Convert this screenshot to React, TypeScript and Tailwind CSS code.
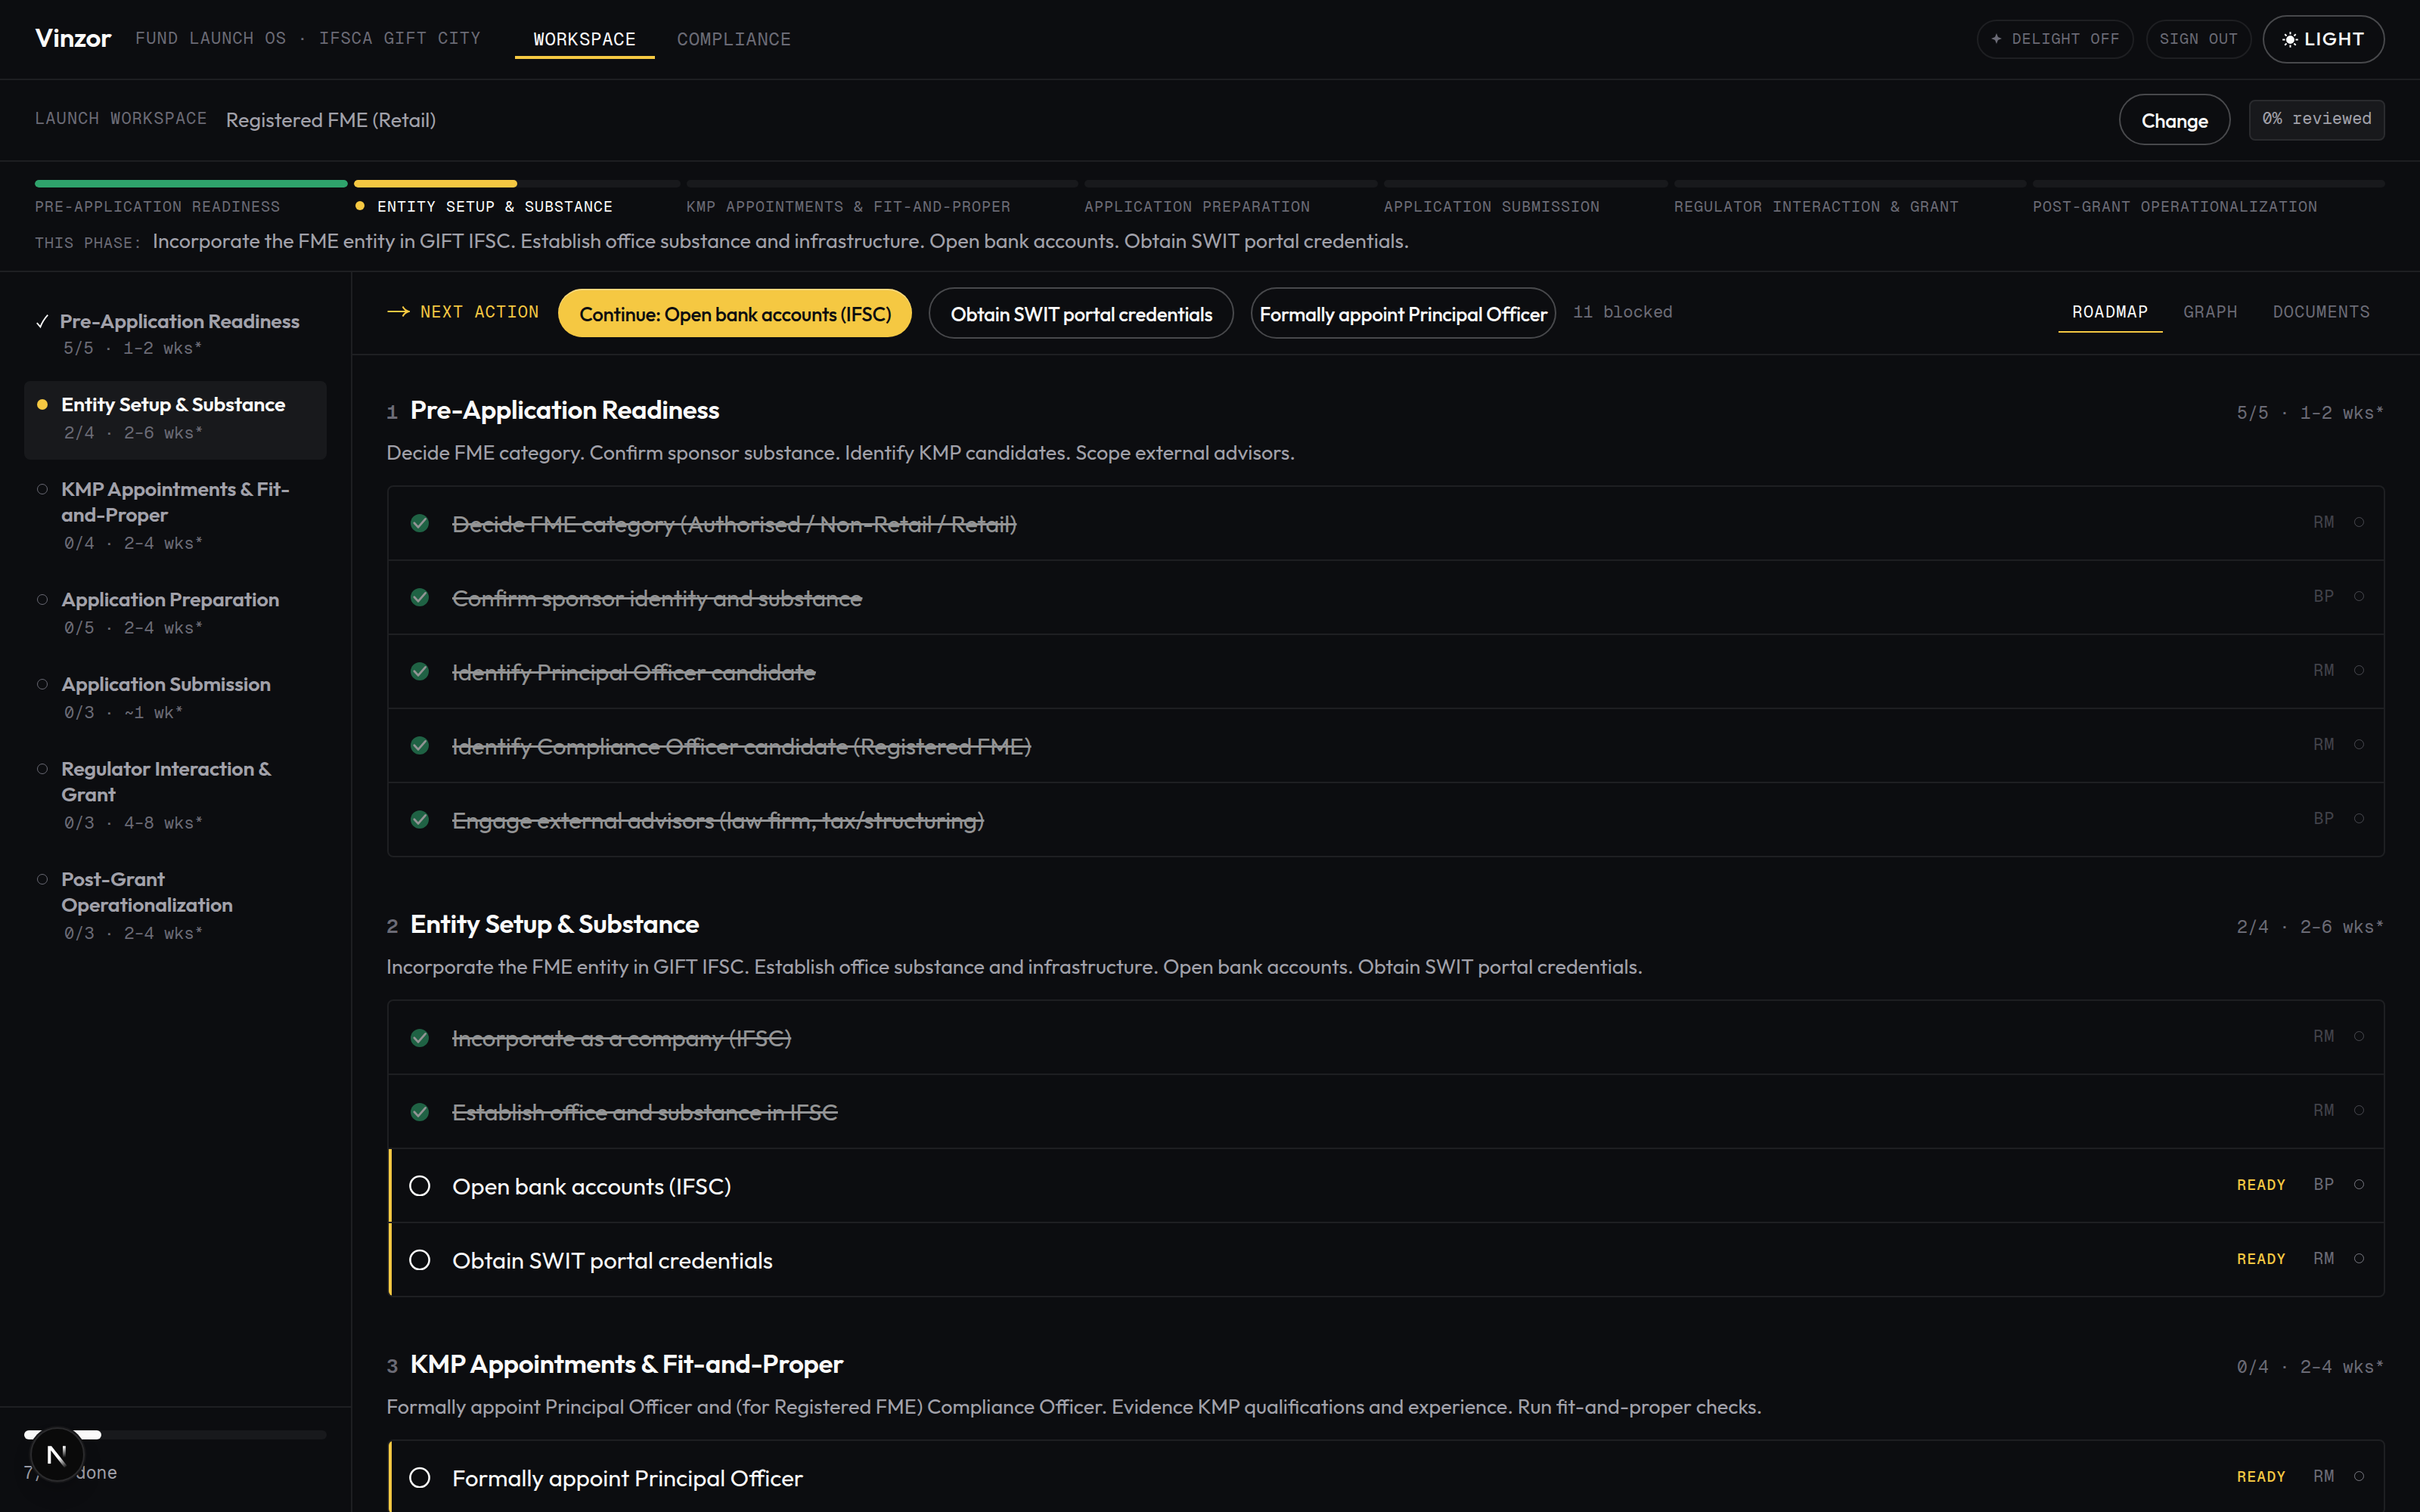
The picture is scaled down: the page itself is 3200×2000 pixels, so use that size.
import type { ReactNode } from 'react';

const SANS = "font-['Outfit','Lato',sans-serif]";
const MONO = "font-['Geist_Mono','DejaVu_Sans_Mono',monospace]";

type Task = { title: string; owner: string; done?: boolean };
type Section = { id: number; title: string; meta: string; desc: string; tasks: Task[]; iconOffset?: string };
type Status = 'done' | 'active' | 'todo';

const phases: { label: string; bar: string; status: Status }[] = [
  { label: 'PRE-APPLICATION READINESS', bar: 'w-[414px]', status: 'done' },
  { label: 'ENTITY SETUP & SUBSTANCE', bar: 'w-[432px]', status: 'active' },
  { label: 'KMP APPOINTMENTS & FIT-AND-PROPER', bar: 'w-[518px]', status: 'todo' },
  { label: 'APPLICATION PREPARATION', bar: 'w-[388px]', status: 'todo' },
  { label: 'APPLICATION SUBMISSION', bar: 'w-[376px]', status: 'todo' },
  { label: 'REGULATOR INTERACTION & GRANT', bar: 'w-[466px]', status: 'todo' },
  { label: 'POST-GRANT OPERATIONALIZATION', bar: 'w-[466px]', status: 'todo' },
];

const sidebar: { title: string; meta: string; status: Status }[] = [
  { title: 'Pre-Application Readiness', meta: '5/5 · 1–2 wks*', status: 'done' },
  { title: 'Entity Setup & Substance', meta: '2/4 · 2–6 wks*', status: 'active' },
  { title: 'KMP Appointments & Fit-and-Proper', meta: '0/4 · 2–4 wks*', status: 'todo' },
  { title: 'Application Preparation', meta: '0/5 · 2–4 wks*', status: 'todo' },
  { title: 'Application Submission', meta: '0/3 · ~1 wk*', status: 'todo' },
  { title: 'Regulator Interaction & Grant', meta: '0/3 · 4–8 wks*', status: 'todo' },
  { title: 'Post-Grant Operationalization', meta: '0/3 · 2–4 wks*', status: 'todo' },
];

const sections: Section[] = [
  {
    id: 1,
    title: 'Pre-Application Readiness',
    meta: '5/5 · 1–2 wks*',
    desc: 'Decide FME category. Confirm sponsor substance. Identify KMP candidates. Scope external advisors.',
    iconOffset: 'mb-[2px]',
    tasks: [
      { title: 'Decide FME category (Authorised / Non-Retail / Retail)', owner: 'RM', done: true },
      { title: 'Confirm sponsor identity and substance', owner: 'BP', done: true },
      { title: 'Identify Principal Officer candidate', owner: 'RM', done: true },
      { title: 'Identify Compliance Officer candidate (Registered FME)', owner: 'RM', done: true },
      { title: 'Engage external advisors (law firm, tax/structuring)', owner: 'BP', done: true },
    ],
  },
  {
    id: 2,
    title: 'Entity Setup & Substance',
    meta: '2/4 · 2–6 wks*',
    desc: 'Incorporate the FME entity in GIFT IFSC. Establish office substance and infrastructure. Open bank accounts. Obtain SWIT portal credentials.',
    tasks: [
      { title: 'Incorporate as a company (IFSC)', owner: 'RM', done: true },
      { title: 'Establish office and substance in IFSC', owner: 'RM', done: true },
      { title: 'Open bank accounts (IFSC)', owner: 'BP' },
      { title: 'Obtain SWIT portal credentials', owner: 'RM' },
    ],
  },
  {
    id: 3,
    title: 'KMP Appointments & Fit-and-Proper',
    meta: '0/4 · 2–4 wks*',
    desc: 'Formally appoint Principal Officer and (for Registered FME) Compliance Officer. Evidence KMP qualifications and experience. Run fit-and-proper checks.',
    tasks: [{ title: 'Formally appoint Principal Officer', owner: 'RM' }],
  },
];

function Mono({ className, children }: { className: string; children: ReactNode }) {
  return <span className={`${MONO} whitespace-nowrap ${className}`}>{children}</span>;
}

function OutlineButton({ className, children }: { className: string; children: ReactNode }) {
  return (
    <button
      className={`flex h-[68px] shrink-0 items-center justify-center whitespace-nowrap rounded-full border-2 border-[#48494c] pt-[2px] text-[26px] font-medium tracking-[-0.38px] text-[#fafafa] ${className}`}
    >
      {children}
    </button>
  );
}

function StarIcon() {
  return (
    <svg className="size-[14px]" viewBox="0 0 14 14" fill="currentColor">
      <path d="M7 0 L9 5 L14 7 L9 9 L7 14 L5 9 L0 7 L5 5 Z" />
    </svg>
  );
}

function SunIcon() {
  return (
    <svg className="size-[21px]" viewBox="0 0 20 20" fill="none" stroke="currentColor" strokeWidth="1.9">
      <circle cx="10" cy="10" r="5.2" fill="currentColor" stroke="none" />
      <path d="M10 0.2 V3.4 M10 16.6 V19.8 M0.2 10 H3.4 M16.6 10 H19.8 M3.1 3.1 L5.3 5.3 M14.7 14.7 L16.9 16.9 M3.1 16.9 L5.3 14.7 M14.7 5.3 L16.9 3.1" />
    </svg>
  );
}

function Header() {
  return (
    <header className="flex h-[106px] items-center border-b-2 border-[#1e1f22] px-[46px]">
      <span className="mb-[6px] text-[35px] font-semibold tracking-[-0.35px]">Vinzor</span>
      <Mono className="mb-[3px] ml-[31px] text-[22px] tracking-[1.1px] text-[#6b6b76]">FUND LAUNCH OS · IFSCA GIFT CITY</Mono>
      <nav className="ml-[45px] flex gap-[6px]">
        <a className={`${MONO} flex h-[52px] items-center border-b-4 border-[#f5c842] px-6 pt-[4px] text-[24px] tracking-[0.72px] text-[#fafafa]`}>
          WORKSPACE
        </a>
        <a className={`${MONO} flex h-[52px] items-center border-b-4 border-transparent px-6 pt-[4px] text-[24px] tracking-[0.72px] text-[#6b6b76]`}>
          COMPLIANCE
        </a>
      </nav>
      <div className="ml-auto flex items-center">
        <button className={`${MONO} flex h-[52px] w-[208px] items-center justify-center gap-[14px] whitespace-nowrap rounded-full border-2 border-[#1e1f22] pb-[2px] text-[20px] tracking-[1px] text-[#6b6b76]`}>
          <StarIcon />
          DELIGHT OFF
        </button>
        <button className={`${MONO} ml-4 flex h-[52px] w-[140px] items-center justify-center rounded-full border-2 border-[#1e1f22] pb-[2px] text-[20px] tracking-[1px] text-[#6b6b76]`}>
          SIGN OUT
        </button>
        <button className="ml-[14px] flex h-[64px] w-[162px] items-center justify-center gap-[8px] whitespace-nowrap rounded-full border-2 border-[#48494c] text-[25px] font-medium tracking-[1.5px] text-[#fafafa]">
          <SunIcon />
          LIGHT
        </button>
      </div>
    </header>
  );
}

function WorkspaceBar() {
  return (
    <div className="flex h-[108px] items-center border-b-2 border-[#1e1f22] px-[46px]">
      <Mono className="mb-[6px] text-[22px] tracking-[1.1px] text-[#6b6b76]">LAUNCH WORKSPACE</Mono>
      <span className="mb-[2px] ml-6 text-[27px] text-[#a1a1aa]">Registered FME (Retail)</span>
      <OutlineButton className="mb-[2px] ml-auto w-[148px]">Change</OutlineButton>
      <span className={`${MONO} ml-6 flex h-[54px] w-[180px] items-center justify-center whitespace-nowrap rounded-lg border-2 border-[#2a2b2e] bg-[#18191c] pb-[5px] text-[22px] text-[#a1a1aa]`}>
        0% reviewed
      </span>
    </div>
  );
}

function PhaseStrip() {
  return (
    <div className="h-[146px] border-b-2 border-[#1e1f22] px-[46px] pt-6">
      <div className="flex gap-2">
        {phases.map((p) => (
          <div key={p.label} className={`shrink-0 ${p.bar}`}>
            <div className="flex h-[10px] overflow-hidden rounded-[5px] bg-[#18191c]">
              {p.status === 'done' && <div className="w-full rounded-[5px] bg-[#2fa36c]" />}
              {p.status === 'active' && <div className="w-1/2 rounded-[5px] bg-[#f5c842]" />}
            </div>
            <div className="mt-3 flex h-[26px] items-center">
              {p.status === 'active' && <span className="mb-[2px] ml-[2px] mr-[17px] size-3 rounded-full bg-[#f5c842]" />}
              <Mono className={`text-[20px] tracking-[1px] ${p.status === 'active' ? 'text-[#fafafa]' : 'text-[#6b6b76]'}`}>{p.label}</Mono>
            </div>
          </div>
        ))}
      </div>
      <div className="mt-[12px] flex items-baseline">
        <Mono className="text-[20px] tracking-[1px] text-[#6b6b76]">THIS PHASE:</Mono>
        <span className="ml-[13px] whitespace-nowrap text-[27px] text-[#a1a1aa]">{sections[1].desc}</span>
      </div>
    </div>
  );
}

function StatusMark({ status }: { status: Status }) {
  if (status === 'done') {
    return (
      <svg className="-ml-px mt-[8px] h-[20px] w-[16px] shrink-0" viewBox="0 0 16 20" fill="none">
        <path d="M0.8 12.2 L5.4 17.4 Q8.5 9 15.2 1.6" stroke="#fafafa" strokeWidth="1.9" />
      </svg>
    );
  }
  if (status === 'active') return <span className="mt-[11px] size-[14px] shrink-0 rounded-full bg-[#f5c842]" />;
  return <span className="mt-[11px] size-[14px] shrink-0 rounded-full border border-[#6b6b76]" />;
}

function Sidebar() {
  return (
    <aside className="flex w-[466px] shrink-0 flex-col border-r-2 border-[#1e1f22]">
      <nav className="flex flex-col gap-2 px-8 pt-[34px]">
        {sidebar.map((s) => (
          <a
            key={s.title}
            className={`flex rounded-lg pb-[21px] pl-[17px] pr-4 pt-[13px] ${s.status === 'active' ? 'bg-[#18191c]' : ''}`}
          >
            <StatusMark status={s.status} />
            <div className={s.status === 'done' ? 'ml-[15px]' : 'ml-[18px]'}>
              <div
                className={`text-[27px] font-semibold leading-[34px] tracking-[-0.27px] ${s.status === 'active' ? 'text-[#fafafa]' : 'text-[#a1a1aa]'}`}
              >
                {s.title}
              </div>
              <Mono
                className={`block text-[22px] leading-[29px] text-[#6b6b76] ${s.status === 'done' ? 'ml-[5px] mt-[5px]' : 'ml-[4px] mt-[7px]'}`}
              >
                {s.meta}
              </Mono>
            </div>
          </a>
        ))}
      </nav>
      <div className="mt-auto h-[140px] border-t-2 border-[#1e1f22] px-8 pt-[30px]">
        <div className="flex h-3 rounded-full bg-[#18191c]">
          <div className="w-[102px] rounded-full bg-[#fafafa]" />
        </div>
        <Mono className="-ml-px mt-[29px] block text-[23px] leading-[30px] text-[#a1a1aa]">7/27 done</Mono>
      </div>
    </aside>
  );
}

function Toolbar() {
  const tab = 'flex h-[52px] items-center border-b-2 px-[19px] pb-[2px] text-[22px] tracking-[1.2px]';
  return (
    <div className="flex h-[110px] shrink-0 items-center border-b-2 border-[#1e1f22] px-[46px]">
      <svg className="mb-[4px] h-[16px] w-[30px] shrink-0" viewBox="0 0 30 16" fill="none" stroke="#f5c842" strokeWidth="2">
        <path d="M0.5 8 H28 M20.5 1.5 Q23 6.5 28.5 8 Q23 9.5 20.5 14.5" />
      </svg>
      <Mono className="mb-[4px] ml-[14px] text-[22px] tracking-[1.1px] text-[#f5c842]">NEXT ACTION</Mono>
      <button className="ml-[25px] flex h-[64px] w-[468px] shrink-0 items-center justify-center whitespace-nowrap rounded-full bg-[#f5c842] pt-[2px] text-[26px] font-medium tracking-[-0.38px] text-[#0c0d10] shadow-[inset_0_2px_0_rgba(255,255,255,0.3)]">
        Continue: Open bank accounts (IFSC)
      </button>
      <OutlineButton className="ml-[22px] w-[404px]">Obtain SWIT portal credentials</OutlineButton>
      <OutlineButton className="ml-[22px] w-[404px]">Formally appoint Principal Officer</OutlineButton>
      <Mono className="mb-[4px] ml-[22px] text-[22px] text-[#6b6b76]">11 blocked</Mono>
      <div className="ml-auto flex gap-2">
        <a className={`${MONO} ${tab} border-[#f5c842] text-[#fafafa]`}>ROADMAP</a>
        <a className={`${MONO} ${tab} border-transparent text-[#6b6b76]`}>GRAPH</a>
        <a className={`${MONO} ${tab} border-transparent text-[#6b6b76]`}>DOCUMENTS</a>
      </div>
    </div>
  );
}

function TaskIcon({ done, className }: { done?: boolean; className: string }) {
  return (
    <svg className={`size-7 shrink-0 ${className}`} viewBox="0 0 28 28" fill="none">
      {done ? (
        <>
          <circle cx="14" cy="15" r="12" fill="#2fa36c" />
          <path d="M6.8 14.8 L12 20.4 L21.6 9.4" stroke="#fafafa" strokeWidth="2.8" strokeLinecap="round" strokeLinejoin="round" />
        </>
      ) : (
        <circle cx="14" cy="14.6" r="12.6" stroke="#fafafa" strokeWidth="2.6" />
      )}
    </svg>
  );
}

function TaskRow({ task, iconOffset = '' }: { task: Task; iconOffset?: string }) {
  return (
    <div className={task.done ? '' : 'shadow-[inset_4px_0_0_#f5c842]'}>
      <div className={`flex h-24 items-center pl-[27px] pr-[26px] ${task.done ? 'opacity-[0.57]' : ''}`}>
        <TaskIcon done={task.done} className={iconOffset} />
        <span className={`ml-[29px] mt-[2px] whitespace-nowrap text-[31px] text-[#fafafa] ${task.done ? 'line-through' : ''}`}>{task.title}</span>
        <div className="mb-[4px] ml-auto flex items-baseline">
          {!task.done && <Mono className="mr-[36px] text-[20px] font-medium tracking-[1px] text-[#f5c842]">READY</Mono>}
          <Mono className="text-[22px] tracking-[0.66px] text-[#6b6b76]">{task.owner}</Mono>
        </div>
        <span className="mb-[4px] ml-[26px] size-[13px] rounded-full border border-[#7b7b84]" />
      </div>
    </div>
  );
}

function SectionBlock({ section }: { section: Section }) {
  return (
    <section>
      <div className="flex h-11 items-baseline leading-[42px]">
        <Mono className="-ml-px text-[26px] font-semibold text-[#6b6b76]">{section.id}</Mono>
        <h2 className="ml-4 whitespace-nowrap text-[35px] font-semibold tracking-[-0.44px] text-[#fafafa]">{section.title}</h2>
        <Mono className="ml-auto text-[23px] tracking-[0.2px] text-[#6b6b76]">{section.meta}</Mono>
      </div>
      <p className="-ml-px mt-[17px] whitespace-nowrap text-[27px] leading-[34px] text-[#a1a1aa]">{section.desc}</p>
      <div className="mt-[27px] divide-y-2 divide-[#1e1f22] overflow-hidden rounded-lg border-2 border-[#1e1f22]">
        {section.tasks.map((t) => (
          <TaskRow key={t.title} task={t} iconOffset={section.iconOffset} />
        ))}
      </div>
    </section>
  );
}

function DevBadge() {
  return (
    <div className="absolute left-[40px] top-[1888px] flex size-[72px] items-center justify-center rounded-full border-2 border-[#2b2b2d] bg-[#0a0a0a] shadow-[0_0_0_2px_#161618,0_16px_32px_-8px_rgba(0,0,0,0.24)]">
      <svg className="size-[68px] shrink-0" viewBox="0 0 68 68" fill="none">
        <defs>
          <linearGradient id="stem" x1="43" y1="23" x2="43" y2="38" gradientUnits="userSpaceOnUse">
            <stop stopColor="#fff" />
            <stop offset="1" stopColor="#fff" stopOpacity="0" />
          </linearGradient>
          <linearGradient id="diag" x1="37" y1="38" x2="46.5" y2="50.5" gradientUnits="userSpaceOnUse">
            <stop stopColor="#fff" />
            <stop offset="1" stopColor="#fff" stopOpacity="0" />
          </linearGradient>
        </defs>
        <rect x="41" y="22.7" width="3.8" height="16" fill="url(#stem)" />
        <path d="M21.3 22.7 H26 L46.6 48.8 L43.3 51.4 L25.3 28.6 V46 H21.3 Z" fill="url(#diag)" />
      </svg>
    </div>
  );
}

export default function App() {
  return (
    <div className={`${SANS} relative flex h-[2000px] w-[3200px] flex-col overflow-hidden bg-[#0c0d10] text-[#fafafa]`}>
      <Header />
      <WorkspaceBar />
      <PhaseStrip />
      <div className="flex min-h-0 flex-1">
        <Sidebar />
        <main className="flex min-w-0 flex-1 flex-col overflow-hidden">
          <Toolbar />
          <div className="flex flex-col gap-[66px] px-[46px] pt-[50px]">
            {sections.map((s) => (
              <SectionBlock key={s.id} section={s} />
            ))}
          </div>
        </main>
      </div>
      <DevBadge />
    </div>
  );
}
